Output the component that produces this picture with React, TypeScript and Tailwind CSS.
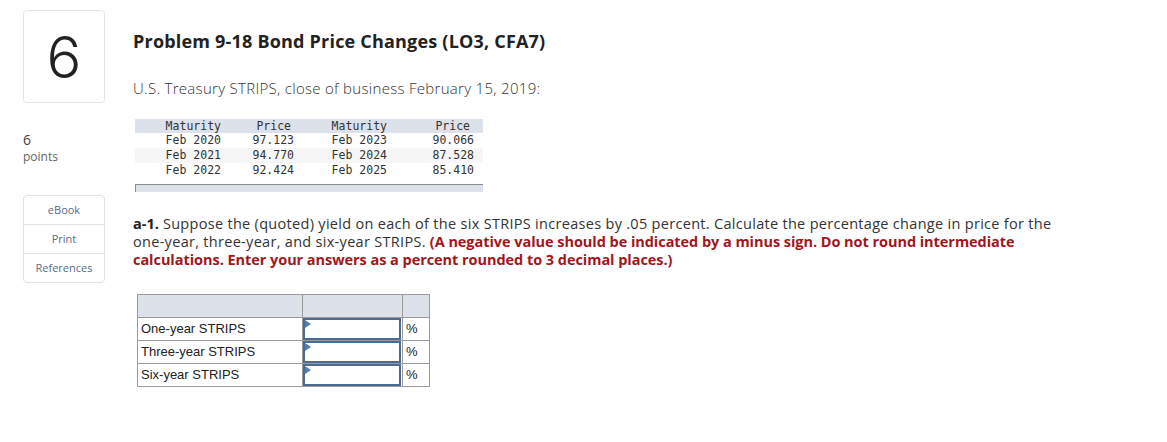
import React from "react";

const strips = [
  ["Feb 2020", "97.123", "Feb 2023", "90.066"],
  ["Feb 2021", "94.770", "Feb 2024", "87.528"],
  ["Feb 2022", "92.424", "Feb 2025", "85.410"],
];

const answers = ["One-year STRIPS", "Three-year STRIPS", "Six-year STRIPS"];

function AnswerInput() {
  return (
    <div className="relative h-[22px] w-[98px] border-2 border-[#4d6b8f] bg-white">
      <span className="absolute left-0 top-0 h-0 w-0 border-y-[4px] border-l-[6px] border-y-transparent border-l-[#4d7eb8]" />
    </div>
  );
}

export default function App() {
  return (
    <div className="flex h-[442px] w-[1167px] bg-white font-['Open_Sans',sans-serif] text-[#333]">
      {/* left rail */}
      <div className="flex w-[128px] shrink-0 flex-col pl-[23px] pt-[10px]">
        <div className="flex h-[93px] w-[82px] items-center justify-center rounded-[4px] border border-[#e4e4e4] font-['Inter',sans-serif] text-[58px] font-light leading-none text-[#222]">
          6
        </div>
        <div className="mt-[28px] text-[14px] leading-[18px] text-[#444]">6</div>
        <div className="text-[12px] leading-[16px] text-[#666]">points</div>
        <div className="mt-[30px] flex w-[82px] flex-col rounded-[4px] border border-[#e2e2e2] text-[11px] text-[#5a6c86]">
          <div className="flex h-[29px] items-center justify-center border-b border-[#e2e2e2]">eBook</div>
          <div className="flex h-[29px] items-center justify-center border-b border-[#e2e2e2]">Print</div>
          <div className="flex h-[28px] items-center justify-center">References</div>
        </div>
      </div>

      {/* main */}
      <div className="flex flex-col items-start pl-[5px] pt-[29px]">
        <h1 className="text-[18px] font-bold leading-[24px] tracking-[0.2px] text-[#222]">
          Problem 9-18 Bond Price Changes (LO3, CFA7)
        </h1>
        <p className="mt-[25px] text-[15px] font-light leading-[20px] tracking-[0.3px] text-[#333]">
          U.S. Treasury STRIPS, close of business February 15, 2019:
        </p>

        <div className="ml-[2px] mt-[21px] w-[348px] font-['DejaVu_Sans_Mono',monospace] text-[11.5px] leading-[15px] text-[#333]">
          <div className="flex h-[14px] bg-[#dde1e9] leading-[14px]">
            <span className="w-[86px] text-right">Maturity</span>
            <span className="w-[70px] text-right">Price</span>
            <span className="w-[96px] text-right">Maturity</span>
            <span className="w-[83px] text-right">Price</span>
          </div>
          {strips.map((r, i) => (
            <div key={i} className={`flex h-[15px] ${i === 1 ? "bg-[#f6f6f6]" : ""}`}>
              <span className="w-[86px] text-right">{r[0]}</span>
              <span className="w-[73px] text-right">{r[1]}</span>
              <span className="w-[93px] text-right">{r[2]}</span>
              <span className="w-[87px] text-right">{r[3]}</span>
            </div>
          ))}
          <div className="mt-[6px] h-[8px] border-l border-t border-[#8a8a8a] bg-[#dde1e9]" />
        </div>

        <p className="mt-[23px] whitespace-nowrap text-[14.5px] leading-[18px] tracking-[0.3px] text-[#333]">
          <b className="font-bold tracking-[0px] text-[#222]">a-1.</b> Suppose the (quoted) yield on each of the six STRIPS increases by .05 percent. Calculate the percentage change in price for the
          <br />
          one-year, three-year, and six-year STRIPS.{" "}
          <b className="font-bold tracking-[-0.05px] text-[#a3151c]">
            (A negative value should be indicated by a minus sign. Do not round intermediate
            <br />
            calculations. Enter your answers as a percent rounded to 3 decimal places.)
          </b>
        </p>

        <table className="ml-[4px] mt-[25px] table-fixed border-collapse font-['Liberation_Sans',sans-serif] text-[13px] text-[#222]">
          <tbody>
            <tr className="h-[23px] bg-[#dde1e9]">
              <td className="w-[165px] border border-[#9a9a9a]" />
              <td className="w-[100px] border border-[#9a9a9a]" />
              <td className="w-[27px] border border-[#9a9a9a]" />
            </tr>
            {answers.map((a) => (
              <tr key={a} className="h-[23px]">
                <td className="border border-[#9a9a9a] px-[3px] leading-[20px]">{a}</td>
                <td className="border border-[#9a9a9a] p-0">
                  <AnswerInput />
                </td>
                <td className="border border-[#9a9a9a] px-[3px]">%</td>
              </tr>
            ))}
          </tbody>
        </table>
      </div>
    </div>
  );
}
